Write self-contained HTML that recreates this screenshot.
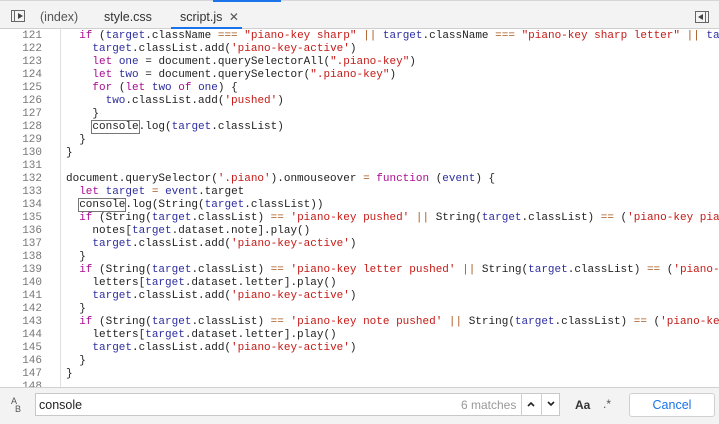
<!DOCTYPE html>
<html><head><meta charset="utf-8"><style>
*{margin:0;padding:0;box-sizing:border-box}
body{width:719px;height:424px;overflow:hidden;background:#fff;font-family:"Liberation Sans",sans-serif;position:relative}
.tabs{position:absolute;left:0;top:0;width:719px;height:29px;background:#f3f3f3;border-bottom:1px solid #cfcfcf;border-top:1px solid #d6d6d6}
.tab{position:absolute;top:9px;font-size:12.5px;color:#333}
.code{position:absolute;left:0;top:29px;width:719px;height:358px;overflow:hidden}
.gut{position:absolute;left:0;top:0;width:61px;height:100%;border-right:1px solid #e0e0e0;background:#fff}
.ln,.cl{font-family:"Liberation Mono",monospace;font-size:11px;line-height:13px;white-space:pre}
.ln{position:absolute;left:0;top:1px;width:42px;text-align:right;color:#777}
.cl{position:absolute;left:66px;top:1px;color:#222}
.k{color:#a90d91}.v{color:#2e2ea0}.s{color:#c41a16}.o{color:#a8561a}
.b{outline:1px solid #777;outline-offset:0}
.bar{position:absolute;left:0;top:387px;width:719px;height:37px;background:#f3f3f3;border-top:1px solid #d0d0d0}
</style></head><body>
<div class="tabs">
 <div style="position:absolute;left:213px;top:-1px;width:68px;height:2px;background:#1a73e8"></div>
 <div style="position:absolute;left:11px;top:9px;width:14px;height:12px;border:1px solid #666"></div>
 <div style="position:absolute;left:14px;top:10px;width:1px;height:10px;background:#666"></div>
 <div style="position:absolute;left:18px;top:12px;width:0;height:0;border-left:5px solid #444;border-top:3px solid transparent;border-bottom:3px solid transparent"></div>
 <div class="tab" style="left:40px;color:#555">(index)</div>
 <div class="tab" style="left:104px">style.css</div>
 <div class="tab" style="left:180px">script.js <span style="color:#555;font-size:12px;margin-left:3px">✕</span></div>
 <div style="position:absolute;left:171px;top:26px;width:71px;height:2px;background:#1a73e8"></div>
 <div style="position:absolute;left:695px;top:10px;width:14px;height:12px;border:1px solid #666"></div>
 <div style="position:absolute;left:705px;top:11px;width:1px;height:10px;background:#666"></div>
 <div style="position:absolute;left:698px;top:13px;width:0;height:0;border-right:5px solid #444;border-top:3px solid transparent;border-bottom:3px solid transparent"></div>
</div>
<div class="code">
<div class="gut"></div>
<div class="ln">121
122
123
124
125
126
127
128
129
130
131
132
133
134
135
136
137
138
139
140
141
142
143
144
145
146
147
148</div>
<div class="cl">  <span class="k">if</span> (<span class="v">target</span>.className <span class="o">===</span> <span class="s">"piano-key sharp"</span> <span class="o">||</span> <span class="v">target</span>.className <span class="o">===</span> <span class="s">"piano-key sharp letter"</span> <span class="o">||</span> <span class="v">ta</span>
    <span class="v">target</span>.classList.add(<span class="s">'piano-key-active'</span>)
    <span class="k">let</span> <span class="v">one</span> = document.querySelectorAll(<span class="s">".piano-key"</span>)
    <span class="k">let</span> <span class="v">two</span> = document.querySelector(<span class="s">".piano-key"</span>)
    <span class="k">for</span> (<span class="k">let</span> <span class="v">two</span> <span class="k">of</span> <span class="v">one</span>) {
      <span class="v">two</span>.classList.add(<span class="s">'pushed'</span>)
    }
    <span class="b">console</span>.log(<span class="v">target</span>.classList)
  }
}

document.querySelector(<span class="s">'.piano'</span>).onmouseover <span class="o">=</span> <span class="k">function</span> (<span class="v">event</span>) {
  <span class="k">let</span> <span class="v">target</span> <span class="o">=</span> <span class="v">event</span>.target
  <span class="b">console</span>.log(String(<span class="v">target</span>.classList))
  <span class="k">if</span> (String(<span class="v">target</span>.classList) <span class="o">==</span> <span class="s">'piano-key pushed'</span> <span class="o">||</span> String(<span class="v">target</span>.classList) <span class="o">==</span> (<span class="s">'piano-key pia</span>
    notes[<span class="v">target</span>.dataset.note].play()
    <span class="v">target</span>.classList.add(<span class="s">'piano-key-active'</span>)
  }
  <span class="k">if</span> (String(<span class="v">target</span>.classList) <span class="o">==</span> <span class="s">'piano-key letter pushed'</span> <span class="o">||</span> String(<span class="v">target</span>.classList) <span class="o">==</span> (<span class="s">'piano-</span>
    letters[<span class="v">target</span>.dataset.letter].play()
    <span class="v">target</span>.classList.add(<span class="s">'piano-key-active'</span>)
  }
  <span class="k">if</span> (String(<span class="v">target</span>.classList) <span class="o">==</span> <span class="s">'piano-key note pushed'</span> <span class="o">||</span> String(<span class="v">target</span>.classList) <span class="o">==</span> (<span class="s">'piano-ke</span>
    letters[<span class="v">target</span>.dataset.letter].play()
    <span class="v">target</span>.classList.add(<span class="s">'piano-key-active'</span>)
  }
}
</div>
</div>
<div class="bar">
 <div style="position:absolute;left:11px;top:9px;font-size:9px;color:#555;line-height:8px">A<br><span style="margin-left:4px">B</span></div>
 <div style="position:absolute;left:35px;top:5px;width:525px;height:23px;background:#fff;border:1px solid #c8c8c8"></div>
 <div style="position:absolute;left:39px;top:10px;font-size:12.5px;color:#222">console</div>
 <div style="position:absolute;left:461px;top:10px;font-size:12px;color:#999">6 matches</div>
 <div style="position:absolute;left:521px;top:5px;width:1px;height:23px;background:#d0d0d0"></div>
 <div style="position:absolute;left:541px;top:5px;width:1px;height:23px;background:#d0d0d0"></div>
 <svg style="position:absolute;left:527px;top:13px" width="8" height="6" viewBox="0 0 8 6"><path d="M1 5L4 2L7 5" fill="none" stroke="#222" stroke-width="1.6"/></svg>
 <svg style="position:absolute;left:547px;top:13px" width="8" height="6" viewBox="0 0 8 6"><path d="M1 1L4 4L7 1" fill="none" stroke="#222" stroke-width="1.6"/></svg>
 <div style="position:absolute;left:575px;top:10px;font-size:12px;color:#333;font-weight:bold">Aa</div>
 <div style="position:absolute;left:603px;top:9px;font-size:12px;color:#555">.*</div>
 <div style="position:absolute;left:629px;top:5px;width:86px;height:24px;background:#fff;border:1px solid #d0d0d0;border-radius:3px;text-align:center;font-size:12.5px;line-height:22px;color:#1a73e8">Cancel</div>
</div>
</body></html>
